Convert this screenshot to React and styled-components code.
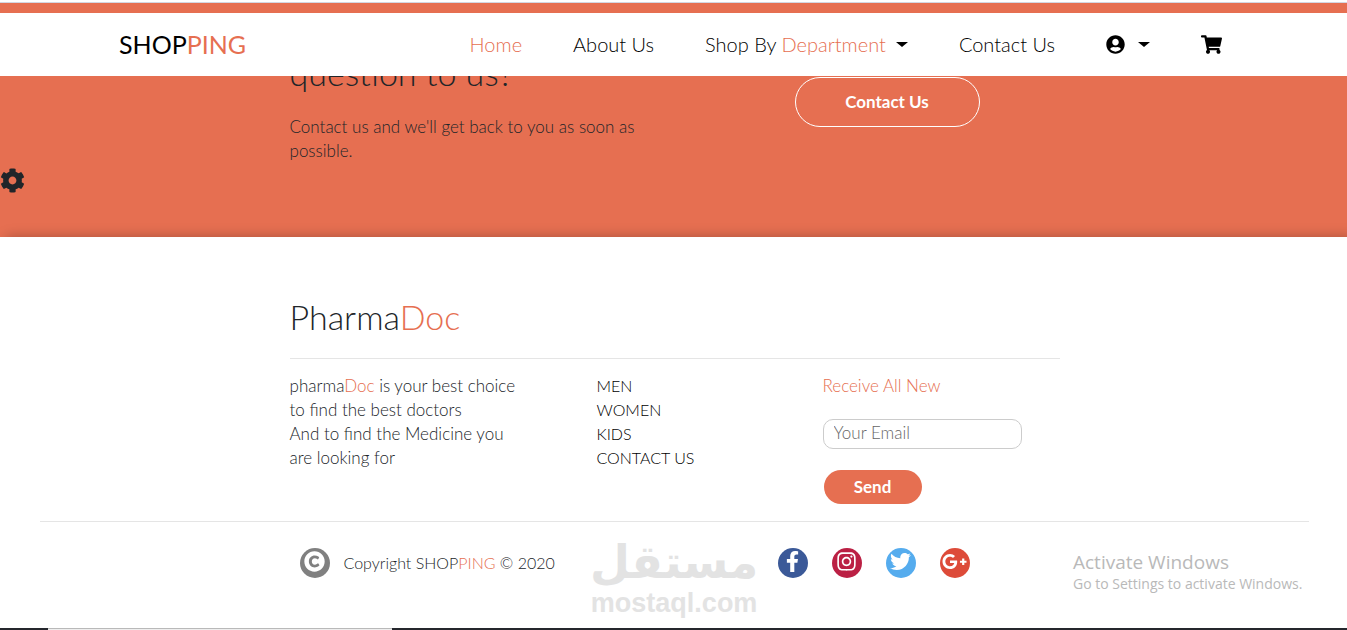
import React from "react";
import styled, { createGlobalStyle } from "styled-components";
import {
  FaCog,
  FaCopyright,
  FaFacebookF,
  FaGooglePlusG,
  FaInstagram,
  FaShoppingCart,
  FaTwitter,
  FaUserCircle,
} from "react-icons/fa";

const accent = "#e66f51";
const ink = "#212529";

const GlobalStyle = createGlobalStyle`
  * { box-sizing: border-box; }
  body {
    margin: 0;
    background: #fff;
    color: ${ink};
    font: 300 17px/24px Lato, "Liberation Sans", sans-serif;
  }
  h2, p, ul { margin: 0; padding: 0; font-weight: inherit; }
  ul { list-style: none; }
  a { color: inherit; text-decoration: none; }
  button, input { font: inherit; color: inherit; }
  button { cursor: pointer; }
`;

const Page = styled.div`
  position: relative;
  min-height: 100vh;
  display: flex;
  flex-direction: column;
  overflow: hidden;
`;

const TopStrip = styled.div`
  height: 13px;
  border-top: 2px solid #fff;
  background: ${accent};
  box-shadow: inset 0 1px #d3d7e2;
`;

const NavBar = styled.nav`
  display: flex;
  justify-content: space-between;
  align-items: center;
  height: 63px;
  padding: 0 125px 1px 119px;
  background: #fff;
  color: #000;
`;

const Brand = styled.a`
  font-size: 25px;
  font-weight: 400;
`;

const Accent = styled.span`
  color: ${accent};
`;

const Menu = styled.ul`
  display: flex;
  align-items: center;
  gap: 51px;
  font-size: 20px;
`;

const MenuLink = styled.a`
  display: flex;
  color: ${(p) => (p.$active ? accent : "inherit")};
`;

const MenuButton = styled.button`
  display: flex;
  align-items: center;
  gap: ${(p) => p.$gap || 10}px;
  padding: 0;
  border: 0;
  background: none;

  &::after {
    content: "";
    border: 6px solid transparent;
    border-top: 5px solid #000;
    border-bottom: 0;
  }
`;

const ContactBand = styled.section`
  height: 161px;
  padding: 0 38px 0 40px;
  background: ${accent};
  overflow: hidden;
`;

const Container = styled.div`
  width: 100%;
  max-width: 770px;
  margin: 0 auto;
`;

const BandRow = styled(Container)`
  display: grid;
  grid-template-columns: 505px auto;
  justify-content: start;
  align-items: start;
`;

const Question = styled.h2`
  margin: -20px 0 25px;
  font-size: 34px;
  line-height: 34px;
`;

const BandText = styled.p`
  max-width: 370px;
`;

const OutlineButton = styled.a`
  display: grid;
  place-items: center;
  width: 185px;
  height: 50px;
  margin-top: 1px;
  border: 1px solid #fff;
  border-radius: 25px;
  color: #fff;
  font-weight: 700;
`;

const SettingsButton = styled.button`
  position: absolute;
  left: 0;
  top: 168px;
  display: flex;
  padding: 0;
  border: 0;
  background: none;
`;

const Footer = styled.footer`
  position: relative;
  flex: 1;
  padding: 60px 38px 0 40px;
  background: #fff;
  box-shadow: 6px 0 12px rgba(0, 0, 0, 0.27);
`;

const FooterTitle = styled.h2`
  padding-bottom: 22px;
  border-bottom: 1px solid #e5e5e5;
  font-size: 34px;
  line-height: 39px;
`;

const Columns = styled.div`
  display: grid;
  grid-template-columns: 307px 226px 1fr;
  padding: 15px 0 17px;
`;

const About = styled.p`
  max-width: 240px;
`;

const Links = styled.ul`
  color: #000;
  font-size: 16px;
`;

const Subscribe = styled.form`
  display: flex;
  flex-direction: column;
  align-items: flex-start;

  label { color: ${accent}; }
`;

const EmailInput = styled.input`
  width: 199px;
  height: 30px;
  margin: 21px 0;
  padding: 0 10px 3px;
  border: 1px solid #ccc;
  border-radius: 10px;
  background: #fff;

  &::placeholder { color: #666; opacity: 1; }
`;

const SendButton = styled.button`
  width: 98px;
  height: 34px;
  margin-left: 1px;
  border: 0;
  border-radius: 17px;
  background: ${accent};
  color: #fff;
  font-weight: 700;
`;

const BottomBar = styled.div`
  border-top: 1px solid #e5e5e5;
  padding-top: 26px;
`;

const BottomRow = styled(Container)`
  display: grid;
  grid-template-columns: 478px auto;
  justify-content: start;
  padding-left: 10px;
`;

const Copyright = styled.p`
  display: flex;
  align-items: center;
  gap: 14px;
  font-size: 16px;
`;

const Social = styled.ul`
  display: flex;
  gap: 24px;
`;

const Disc = styled.span`
  display: flex;
  justify-content: center;
  align-items: center;
  width: 30px;
  height: 30px;
  padding-bottom: 4px;
  border-radius: 50%;
  background: ${(p) => p.$color};
  color: #fff;

  svg {
    flex: none;
    width: auto;
    height: ${(p) => p.$size || 21}px;
  }
`;

const Watermark = styled.div`
  position: absolute;
  left: 590px;
  bottom: 13px;
  color: #e3e3e3;
  font: 700 27px/28px "Liberation Sans", sans-serif;
  text-align: center;

  span {
    display: block;
    font: 700 46px/54px "DejaVu Sans", sans-serif;
  }
`;

const SystemNotice = styled.div`
  position: absolute;
  right: 38px;
  bottom: 36px;
  min-width: 236px;
  color: #b9b9b9;
  font: 400 14px/20px "Open Sans", sans-serif;

  strong {
    display: block;
    font-size: 19px;
    line-height: 24px;
    font-weight: 400;
  }
`;

const Taskbar = styled.div`
  position: absolute;
  left: 0;
  right: 0;
  bottom: 0;
  display: flex;
  height: 2px;
  padding-left: 48px;
  background: #25272d;

  &::before {
    content: "";
    width: 344px;
    border-top: 1px solid #b9b9b9;
    background: #eee;
  }
`;

const socials = [
  { name: "Facebook", color: "#3b5998", Icon: FaFacebookF },
  { name: "Instagram", color: "#bb2044", Icon: FaInstagram },
  { name: "Twitter", color: "#55acee", Icon: FaTwitter },
  { name: "Google Plus", color: "#dd4b39", Icon: FaGooglePlusG, size: 25 },
];

const links = ["MEN", "WOMEN", "KIDS", "CONTACT US"];

export default function App() {
  return (
    <>
      <GlobalStyle />
      <Page>
        <header>
          <TopStrip />
          <NavBar>
            <Brand href="#">
              SHOP<Accent>PING</Accent>
            </Brand>
            <Menu>
              <li><MenuLink href="#" $active>Home</MenuLink></li>
              <li><MenuLink href="#">About Us</MenuLink></li>
              <li>
                <MenuButton type="button">
                  <span>Shop By <Accent>Department</Accent></span>
                </MenuButton>
              </li>
              <li><MenuLink href="#">Contact Us</MenuLink></li>
              <li>
                <MenuButton type="button" $gap={13} aria-label="Account">
                  <FaUserCircle size={19} />
                </MenuButton>
              </li>
              <li>
                <MenuLink href="#" aria-label="Cart"><FaShoppingCart size={21} /></MenuLink>
              </li>
            </Menu>
          </NavBar>
        </header>

        <ContactBand>
          <BandRow>
            <div>
              <Question>question to us?</Question>
              <BandText>Contact us and we'll get back to you as soon as possible.</BandText>
            </div>
            <OutlineButton href="#">Contact Us</OutlineButton>
          </BandRow>
        </ContactBand>

        <Footer>
          <Container>
            <FooterTitle>
              Pharma<Accent>Doc</Accent>
            </FooterTitle>
            <Columns>
              <About>
                pharma<Accent>Doc</Accent> is your best choice<br />
                to find the best doctors<br />
                And to find the Medicine you<br />
                are looking for
              </About>
              <Links>
                {links.map((text) => (
                  <li key={text}><a href="#">{text}</a></li>
                ))}
              </Links>
              <Subscribe>
                <label htmlFor="email">Receive All New</label>
                <EmailInput id="email" type="email" placeholder="Your Email" />
                <SendButton type="button">Send</SendButton>
              </Subscribe>
            </Columns>
          </Container>
          <BottomBar>
            <BottomRow>
              <Copyright>
                <Disc $color="#808080"><FaCopyright /></Disc>
                <span>Copyright SHOP<Accent>PING</Accent> © 2020</span>
              </Copyright>
              <Social>
                {socials.map(({ name, color, Icon, size }) => (
                  <li key={name}>
                    <a href="#" aria-label={name}>
                      <Disc $color={color} $size={size}><Icon /></Disc>
                    </a>
                  </li>
                ))}
              </Social>
            </BottomRow>
          </BottomBar>
        </Footer>

        <SettingsButton type="button" aria-label="Settings"><FaCog size={25} /></SettingsButton>
        <Watermark><span lang="ar">مستقل</span>mostaql.com</Watermark>
        <SystemNotice>
          <strong>Activate Windows</strong>
          Go to Settings to activate Windows.
        </SystemNotice>
        <Taskbar />
      </Page>
    </>
  );
}
